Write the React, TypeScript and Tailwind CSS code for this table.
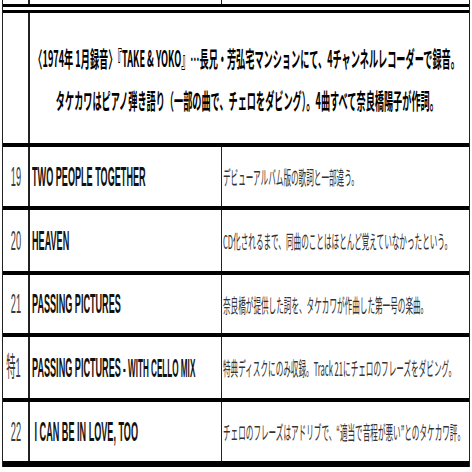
import React from "react";

const latin = "font-['Liberation_Sans','Noto_Sans_CJK_JP',sans-serif]";
const cjk = "font-['Noto_Sans_CJK_JP','Liberation_Sans',sans-serif]";

type Row = { n: string; t: React.ReactNode; d: string; h: string };

const rows: Row[] = [
  { n: "19", t: "TWO PEOPLE TOGETHER", d: "デビューアルバム版の歌詞と一部違う。", h: "h-[63px]" },
  { n: "20", t: "HEAVEN", d: "CD化されるまで、同曲のことはほとんど覚えていなかったという。", h: "h-[65px]" },
  { n: "21", t: "PASSING PICTURES", d: "奈良橋が提供した詞を、タケカワが作曲した第一号の楽曲。", h: "h-[62px]" },
  {
    n: "特1",
    t: (
      <>
        PASSING PICTURES<span className="text-[25px]"> - WITH CELLO MIX</span>
      </>
    ),
    d: "特典ディスクにのみ収録。Track 21にチェロのフレーズをダビング。",
    h: "h-[65px]",
  },
  { n: "22", t: " I CAN BE IN LOVE, TOO", d: "チェロのフレーズはアドリブで、“適当で音程が悪い”とのタケカワ評。", h: "h-[65px]" },
];

function DataRow({ r, last }: { r: Row; last: boolean }) {
  return (
    <div className={`flex ${r.h} ${last ? "border-b-[6px]" : "border-b-4"} border-black`}>
      <div className="w-[27px] shrink-0 border-r-2 border-[#222] flex items-center justify-end pr-[7px] overflow-hidden">
        <span className={`${latin} shrink-0 whitespace-pre origin-right scale-x-[0.33] text-[28px] leading-none text-[#3a3a3a]`}>
          {r.n}
        </span>
      </div>
      <div className="w-[192px] shrink-0 border-r border-[#222] flex items-center pl-[2px] overflow-hidden">
        <span className={`${latin} shrink-0 whitespace-pre origin-left scale-x-[0.325] text-[28px] leading-none font-bold text-[#111]`}>
          {r.t}
        </span>
      </div>
      <div className="flex-1 flex items-center pl-[1px] overflow-hidden">
        <span className={`${cjk} shrink-0 whitespace-pre origin-left scale-x-[0.40] text-[19px] leading-none text-[#333]`}>
          {r.d}
        </span>
      </div>
    </div>
  );
}

export default function App() {
  return (
    <div className="w-[472px] h-[472px] bg-white overflow-hidden">
      <div className="ml-[2px] w-[468px] border-l border-r border-[#222]">
        {/* remnant of previous row */}
        <div className="flex h-[4px]">
          <div className="w-[27px] shrink-0 border-r-2 border-[#222]" />
          <div className="w-[192px] shrink-0 border-r border-[#222]" />
          <div className="flex-1" />
        </div>
        {/* double rule */}
        <div className="h-[3px] bg-black" />
        <div className="h-[3px] bg-white" />
        <div className="h-[3px] bg-black" />
        {/* header row */}
        <div className="flex h-[134px] border-b-4 border-black">
          <div className="w-[27px] shrink-0 border-r-2 border-[#222]" />
          <div className="flex-1 flex flex-col items-center justify-center overflow-hidden pr-[5px]">
            <span className={`${cjk} shrink-0 whitespace-pre origin-center scale-x-[0.416] text-[22px] leading-[42px] font-bold text-black`}>
              〈1974年 1月録音〉『TAKE &amp; YOKO』…長兄・芳弘宅マンションにて、4チャンネルレコーダーで録音。
            </span>
            <span className={`${cjk} shrink-0 whitespace-pre origin-center scale-x-[0.416] text-[22px] leading-[42px] font-bold text-black`}>
              タケカワはピアノ弾き語り（一部の曲で、チェロをダビング）。4曲すべて奈良橋陽子が作詞。
            </span>
          </div>
        </div>
        {rows.map((r, i) => (
          <DataRow key={i} r={r} last={i === rows.length - 1} />
        ))}
      </div>
    </div>
  );
}
